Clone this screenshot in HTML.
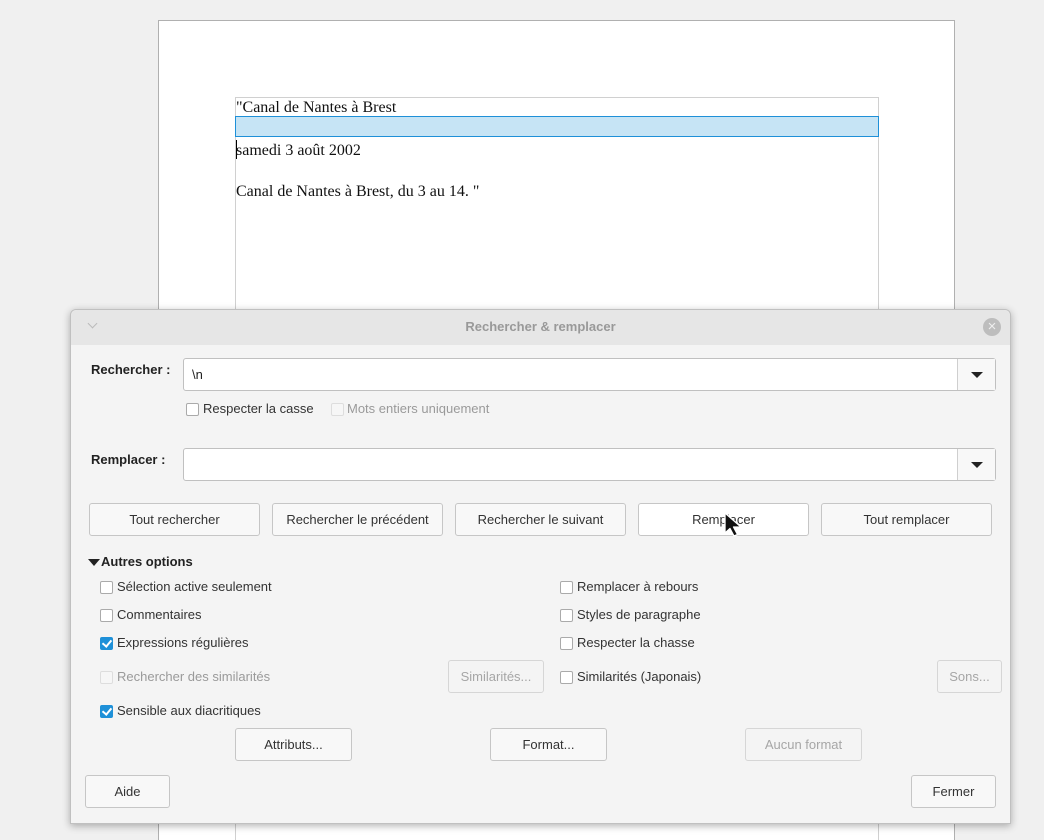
<!DOCTYPE html>
<html><head><meta charset="utf-8"><style>
*{box-sizing:border-box;margin:0;padding:0}
html,body{width:1044px;height:840px;overflow:hidden}
body{background:#f0f0f0;position:relative;font-family:"Liberation Sans",sans-serif;font-size:13px;color:#333}
.a{position:absolute}
.page{left:158px;top:20px;width:797px;height:820px;background:#fff;border:1px solid #b0b0b0;border-bottom:0}
.doc{font-family:"Liberation Serif",serif;font-size:16px;color:#111;white-space:nowrap}
.dlg{left:70px;top:309px;width:941px;height:515px;background:#f4f4f4;border:1px solid #c0c0c0;border-radius:6px 6px 0 0;box-shadow:0 2px 8px rgba(0,0,0,.3)}
.tb{left:0;top:0;width:939px;height:35px;background:#e6e6e6;border-radius:6px 6px 0 0}
.btn{position:absolute;height:33px;border:1px solid #c6c6c6;border-radius:3px;background:#f8f8f8;text-align:center;line-height:31px;color:#333}
.dis{color:#a6a6a6;border-color:#d6d6d6;background:#f4f4f4}
.in{position:absolute;height:33px;border:1px solid #c0c0c0;border-radius:3px;background:#fff}
.dd{position:absolute;right:0;top:0;width:38px;height:31px;border-left:1px solid #cfcfcf;background:#f8f8f8}
.dd:after{content:"";position:absolute;left:13px;top:13px;border:6px solid transparent;border-top:6px solid #222;border-bottom:0}
.cb{position:absolute;width:13px;height:13px;border:1px solid #aaa;border-radius:2px;background:#fff}
.cb.on{background:#1e90d8;border-color:#1e90d8}
.cb.on:after{content:"";position:absolute;left:3px;top:0px;width:4px;height:7px;border:solid #fff;border-width:0 2px 2px 0;transform:rotate(40deg)}
.cb.d{border-color:#ddd;background:#f6f6f6}
.l{position:absolute;white-space:nowrap;line-height:16px}
.g{color:#9a9a9a}
b{font-weight:bold;color:#222}
</style></head><body>
<div class="a page"></div>
<div class="a" style="left:235px;top:97px;width:644px;height:743px;border:1px solid #d0d0d0;border-bottom:0"></div>
<div class="a" style="left:235px;top:116px;width:644px;height:21px;background:#c6e4f5;border:1px solid #1e90d8"></div>
<div class="a doc" style="left:236px;top:99px">"Canal de Nantes à Brest</div>
<div class="a" style="left:236px;top:140px;width:1px;height:19px;background:#000"></div>
<div class="a doc" style="left:236px;top:142px">samedi 3 août 2002</div>
<div class="a doc" style="left:236px;top:183px">Canal de Nantes à Brest, du 3 au 14. "</div>

<div class="a dlg">
<div class="a tb"></div>
<div class="a" style="left:18px;top:10px;width:7px;height:7px;border:solid #bbb;border-width:0 1px 1px 0;transform:rotate(45deg)"></div>
<div class="l" style="left:0;width:939px;text-align:center;top:9px;color:#999;font-weight:bold">Rechercher &amp; remplacer</div>
<div class="a" style="left:912px;top:8px;width:18px;height:18px;border-radius:50%;background:#bdbdbd;color:#eee;text-align:center;line-height:18px;font-size:15px">×</div>
</div>

<div class="l" style="left:91px;top:362px"><b>Rechercher :</b></div>
<div class="in" style="left:183px;top:358px;width:813px"><span class="l" style="left:8px;top:8px;color:#222">\n</span><div class="dd"></div></div>
<div class="cb" style="left:186px;top:403px"></div><div class="l" style="left:203px;top:401px">Respecter la casse</div>
<div class="cb d" style="left:331px;top:403px"></div><div class="l g" style="left:347px;top:401px">Mots entiers uniquement</div>

<div class="l" style="left:91px;top:452px"><b>Remplacer :</b></div>
<div class="in" style="left:183px;top:448px;width:813px"><div class="dd"></div></div>

<div class="btn" style="left:89px;top:503px;width:171px">Tout rechercher</div>
<div class="btn" style="left:272px;top:503px;width:171px">Rechercher le précédent</div>
<div class="btn" style="left:455px;top:503px;width:171px">Rechercher le suivant</div>
<div class="btn" style="left:638px;top:503px;width:171px;background:#fff">Remplacer</div>
<div class="btn" style="left:821px;top:503px;width:171px">Tout remplacer</div>

<div class="a" style="left:88px;top:559px;border:6px solid transparent;border-top:7px solid #222;border-bottom:0"></div>
<div class="l" style="left:101px;top:554px"><b>Autres options</b></div>

<div class="cb" style="left:100px;top:581px"></div><div class="l" style="left:117px;top:579px">Sélection active seulement</div>
<div class="cb" style="left:100px;top:609px"></div><div class="l" style="left:117px;top:607px">Commentaires</div>
<div class="cb on" style="left:100px;top:637px"></div><div class="l" style="left:117px;top:635px">Expressions régulières</div>
<div class="cb d" style="left:100px;top:671px"></div><div class="l g" style="left:117px;top:669px">Rechercher des similarités</div>
<div class="cb on" style="left:100px;top:705px"></div><div class="l" style="left:117px;top:703px">Sensible aux diacritiques</div>

<div class="cb" style="left:560px;top:581px"></div><div class="l" style="left:577px;top:579px">Remplacer à rebours</div>
<div class="cb" style="left:560px;top:609px"></div><div class="l" style="left:577px;top:607px">Styles de paragraphe</div>
<div class="cb" style="left:560px;top:637px"></div><div class="l" style="left:577px;top:635px">Respecter la chasse</div>
<div class="cb" style="left:560px;top:671px"></div><div class="l" style="left:577px;top:669px">Similarités (Japonais)</div>

<div class="btn dis" style="left:448px;top:660px;width:96px">Similarités...</div>
<div class="btn dis" style="left:937px;top:660px;width:65px">Sons...</div>

<div class="btn" style="left:235px;top:728px;width:117px">Attributs...</div>
<div class="btn" style="left:490px;top:728px;width:117px">Format...</div>
<div class="btn dis" style="left:745px;top:728px;width:117px">Aucun format</div>

<div class="btn" style="left:85px;top:775px;width:85px">Aide</div>
<div class="btn" style="left:911px;top:775px;width:85px">Fermer</div>

<svg class="a" style="left:722px;top:511px" width="24" height="28" viewBox="0 0 24 28"><path d="M3 2 L3 22 L8 17.5 L12 25 L15.5 23.5 L11.5 16 L19 16 Z" fill="#111" stroke="#fff" stroke-width="1.3" stroke-linejoin="round"/></svg>
</body></html>
